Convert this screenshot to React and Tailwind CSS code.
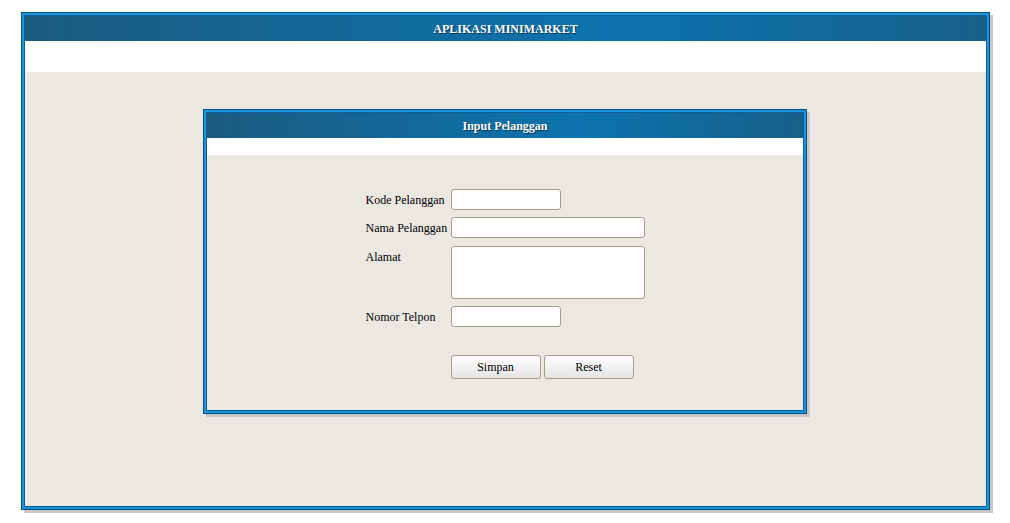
const fields = [
  { label: "Kode Pelanggan", width: "w-[110px]" },
  { label: "Nama Pelanggan", width: "w-[194px]" },
];

function Panel({ title, className, children }) {
  return (
    <div className={`border border-[#0c4d78] shadow-[3px_3px_0_#c8c8c8] ${className}`}>
      <div className="flex h-full flex-col border-2 border-[#1a93df]">
        <div className="flex h-full flex-col border border-[#0d5f96] bg-[#ebe8e2]">
          <div className="flex h-[25px] shrink-0 items-center justify-center bg-[linear-gradient(90deg,#1b5b80_0%,#0c73ae_62%,#176089_100%)] text-[12px] font-bold text-white [text-shadow:1px_1px_0_#0a3552]">
            {title}
          </div>
          {children}
        </div>
      </div>
    </div>
  );
}

function Input({ className }) {
  return (
    <input
      type="text"
      className={`h-[21px] rounded-[3px] border border-[#a59c8c] bg-white px-1 text-[12px] outline-none ${className}`}
    />
  );
}

function Button({ children }) {
  return (
    <button
      type="button"
      className="h-[24px] w-[90px] rounded-[3px] border border-[#a59c8c] bg-[linear-gradient(#ffffff,#e4e4e4)] text-[12px] text-black"
    >
      {children}
    </button>
  );
}

export default function App() {
  return (
    <div className="h-[523px] w-[1010px] bg-white pl-[21px] pt-[12px] font-['Liberation_Serif',serif]">
      <Panel title="APLIKASI MINIMARKET" className="h-[498px] w-[969px]">
        <div className="h-[31px] shrink-0 bg-white" />
        <div className="flex justify-center pt-[37px] pr-[1px]">
          <Panel title="Input Pelanggan" className="h-[305px] w-[604px]">
            <div className="h-[17px] shrink-0 bg-white" />
            {/* Form pelanggan */}
            <div className="flex justify-center pt-[34px]">
              <div className="grid grid-cols-[85px_194px] gap-y-[7px] text-[12px] text-black">
                {fields.map((f) => (
                  <div key={f.label} className="contents">
                    <label className="flex h-[21px] items-center whitespace-nowrap">{f.label}</label>
                    <Input className={f.width} />
                  </div>
                ))}
                <label className="pt-[5px] leading-[15px]">Alamat</label>
                <textarea className="mt-[1px] h-[53px] w-[194px] resize-none rounded-[3px] border border-[#a59c8c] bg-white outline-none" />
                <label className="flex h-[21px] items-center whitespace-nowrap">Nomor Telpon</label>
                <Input className="w-[110px]" />
                <div className="mt-[21px]" />
                <div className="mt-[21px] flex gap-[3px]">
                  <Button>Simpan</Button>
                  <Button>Reset</Button>
                </div>
              </div>
            </div>
          </Panel>
        </div>
      </Panel>
    </div>
  );
}
